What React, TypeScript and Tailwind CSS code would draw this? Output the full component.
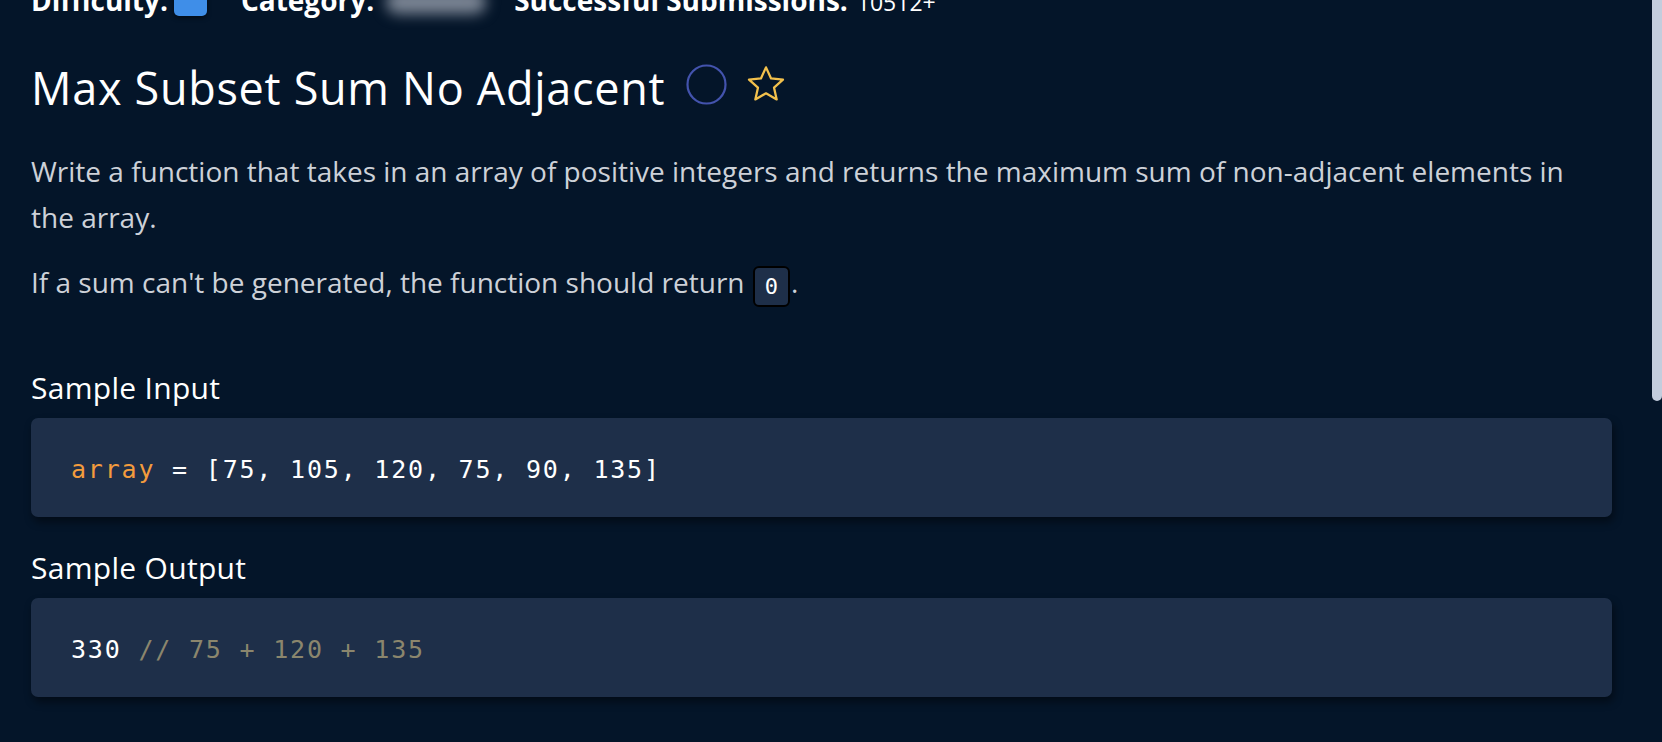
import React from "react";

const sans = "font-['Open_Sans','Noto_Sans',sans-serif]";
const mono = "font-['DejaVu_Sans_Mono','Liberation_Mono',monospace]";

function CodeBox({ children }: { children: React.ReactNode }) {
  return (
    <div className="flex h-[99px] items-center rounded-[7px] bg-[#1e2f49] pl-[40px] pt-[4px] shadow-[2px_5px_8px_rgba(0,0,0,0.45)]">
      <div className={`${mono} text-[25px] leading-[36px] tracking-[1.8px] text-white whitespace-pre`}>
        {children}
      </div>
    </div>
  );
}

export default function App() {
  return (
    <div className={`relative h-[742px] w-full overflow-hidden bg-[#041529] ${sans}`}>
      <div className="-mt-[18px] pl-[31px] pr-[50px]">
        {/* meta row (scrolled partly off) */}
        <div className="flex h-[36px] items-center text-[28px] leading-[36px] text-white">
          <span className="font-bold">Difficulty:</span>
          <span className="ml-[6px] mt-[2px] h-[30px] w-[33px] rounded-[5px] bg-[#3f8ee8] shadow-[0_2px_4px_rgba(0,0,0,0.5)]" />
          <span className="ml-[34px] font-bold">Category:</span>
          <span className="ml-[12px] mt-[4px] h-[24px] w-[100px] rounded-full bg-[#7b8594] blur-[7px]" />
          <span className="ml-[28px] font-bold">Successful Submissions:</span>
          <span className="ml-[9px] mt-[4px] text-[23px] font-normal leading-[36px]">10512+</span>
        </div>

        {/* title */}
        <div className="mt-[42px] flex h-[56px] items-center">
          <h1 className="text-[45px] font-medium leading-[56px] tracking-[0.7px] text-white">Max Subset Sum No Adjacent</h1>
          <svg className="ml-[21px] -mt-[8px]" width="41" height="41" viewBox="0 0 41 41">
            <circle cx="20.5" cy="20.5" r="19" fill="none" stroke="#4353ad" strokeWidth="2.2" />
          </svg>
          <svg className="ml-[18px] -mt-[8px]" width="42" height="42" viewBox="0 0 24 24">
            <path
              d="M12 2.5l2.9 6.3 6.8.7-5.1 4.6 1.5 6.7L12 17.3l-6.1 3.5 1.5-6.7L2.3 9.5l6.8-.7L12 2.5z"
              fill="none"
              stroke="#f2c04c"
              strokeWidth="1.3"
              strokeLinejoin="round"
            />
          </svg>
        </div>

        {/* description */}
        <p className="mt-[33px] max-w-[1545px] text-[28px] leading-[45.5px] text-[#cdd1d8]">
          Write a function that takes in an array of positive integers and returns the maximum sum of non-adjacent elements in the array.
        </p>
        <p className="mt-[20px] text-[28px] leading-[45.5px] text-[#cdd1d8]">
          If a sum can't be generated, the function should return{" "}
          <code
            className={`${mono} relative top-[1px] mx-[1px] inline-block rounded-[6px] border-2 border-black bg-[#1e2f49] px-[10px] py-[4px] text-[22px] leading-[29px] tracking-normal text-white`}
          >
            0
          </code>
          .
        </p>

        {/* sample input */}
        <h2 className="mt-[62px] text-[30px] font-medium leading-[40px] tracking-[0.3px] text-white">Sample Input</h2>
        <div className="mt-[10px]">
          <CodeBox>
            <span className="text-[#f39c3d]">array</span>
            {" = [75, 105, 120, 75, 90, 135]"}
          </CodeBox>
        </div>

        {/* sample output */}
        <h2 className="mt-[31px] text-[30px] font-medium leading-[40px] tracking-[0.3px] text-white">Sample Output</h2>
        <div className="mt-[10px]">
          <CodeBox>
            {"330 "}
            <span className="text-[#8b866d]">// 75 + 120 + 135</span>
          </CodeBox>
        </div>
      </div>

      {/* scrollbar thumb */}
      <div className="absolute right-0 top-0 h-[401px] w-[10px] rounded-b-[6px] bg-[#c3cddd]" />
    </div>
  );
}
